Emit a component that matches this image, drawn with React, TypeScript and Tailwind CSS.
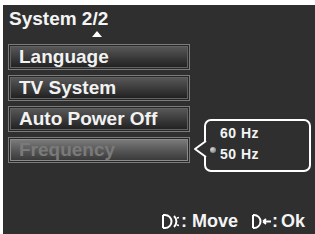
import React from "react";

const rows = ["Language", "TV System", "Auto Power Off", "Frequency"];

function MenuRow({ label, active }: { label: string; active?: boolean }) {
  return (
    <div className="w-[182px] h-[26px] border border-[#7c7c7c] bg-[#262626] p-[1px]">
      <div
        className={
          active
            ? "h-full flex items-center pl-[8px] border border-[#8a8a8a] bg-gradient-to-b from-[#7a7a7a] via-[#585858] to-[#3a3a3a]"
            : "h-full flex items-center pl-[8px] border border-[#626262] bg-gradient-to-b from-[#575757] via-[#3c3c3c] to-[#222222]"
        }
      >
        <span
          className={
            active
              ? "text-[19px] leading-[20px] font-bold text-[#7a7a7a]"
              : "text-[19px] leading-[20px] font-bold text-[#f2f2f2]"
          }
        >
          {label}
        </span>
      </div>
    </div>
  );
}

function DialIcon() {
  return (
    <svg width="19" height="15" viewBox="0 0 19 15" className="shrink-0">
      <path d="M2 1 V14 M2 1 H4 A6.5 6.5 0 0 1 4 14 H2" stroke="#fff" strokeWidth="2" fill="none" />
      <path d="M13 2 A7.5 7.5 0 0 1 13 13" stroke="#fff" strokeWidth="2" fill="none" />
      <path d="M16 4 L18 3.5 M16 11 L18 11.5" stroke="#fff" strokeWidth="1.5" />
    </svg>
  );
}

function EnterIcon() {
  return (
    <svg width="21" height="15" viewBox="0 0 21 15" className="shrink-0">
      <path d="M2 1 V14 M2 1 H3 A6.5 6.5 0 0 1 3 14 H2" stroke="#fff" strokeWidth="2" fill="none" />
      <path d="M12 7.5 H20 M12 7.5 L15 5 M12 7.5 L15 10" stroke="#fff" strokeWidth="1.8" fill="none" />
    </svg>
  );
}

export default function App() {
  return (
    <div
      className="w-[315px] h-[234px] bg-white pt-[5px] pl-[3px] overflow-hidden"
      style={{ fontFamily: '"Liberation Sans", Arial, sans-serif' }}
    >
      <div className="relative w-full h-full bg-[#2f2f2f] flex flex-col">
        {/* Header */}
        <div className="pl-[6px] pt-[3px]">
          <h1 className="text-[19px] leading-[22px] font-bold text-[#f4f4f4]">System 2/2</h1>
        </div>
        <div className="pl-[89px] pt-[1px] h-[6px]">
          <div className="w-0 h-0 border-l-[5px] border-r-[5px] border-b-[6px] border-l-transparent border-r-transparent border-b-white" />
        </div>

        {/* Menu */}
        <div className="flex flex-col gap-[5px] pl-[5px] pt-[8px]">
          {rows.map((r) => (
            <MenuRow key={r} label={r} active={r === "Frequency"} />
          ))}
        </div>

        {/* Popup */}
        <div className="absolute left-[201px] top-[114px] w-[107px] h-[53px] border-2 border-white rounded-[7px] bg-[#2f2f2f] flex flex-col justify-center pl-[14px]">
          <svg width="14" height="18" viewBox="0 0 14 18" className="absolute left-[-13px] top-[19px]">
            <polygon points="14,0 2,9 14,18" fill="#2f2f2f" />
            <path d="M13 1 L2 9 L13 17" stroke="#fff" strokeWidth="2" fill="none" strokeLinejoin="round" />
          </svg>
          <span className="text-[14px] leading-[17px] font-bold tracking-[0.5px] text-[#f4f4f4]">60 Hz</span>
          <div className="relative">
            <span className="absolute left-[-10px] top-[5px] w-[6px] h-[6px] rounded-full bg-[radial-gradient(circle_at_35%_35%,#d8d8d8,#6a6a6a)]" />
            <span className="text-[14px] leading-[17px] font-bold tracking-[0.5px] text-[#f4f4f4]">50 Hz</span>
          </div>
        </div>

        {/* Legend */}
        <div className="mt-auto mb-[4px] flex items-center justify-end pr-[10px] text-[18px] leading-[18px] font-bold text-[#f4f4f4]">
          <DialIcon />
          <span className="ml-[1px]">: Move</span>
          <span className="ml-[13px]">
            <EnterIcon />
          </span>
          <span>:</span>
          <span className="ml-[3px]">Ok</span>
        </div>
      </div>
    </div>
  );
}
